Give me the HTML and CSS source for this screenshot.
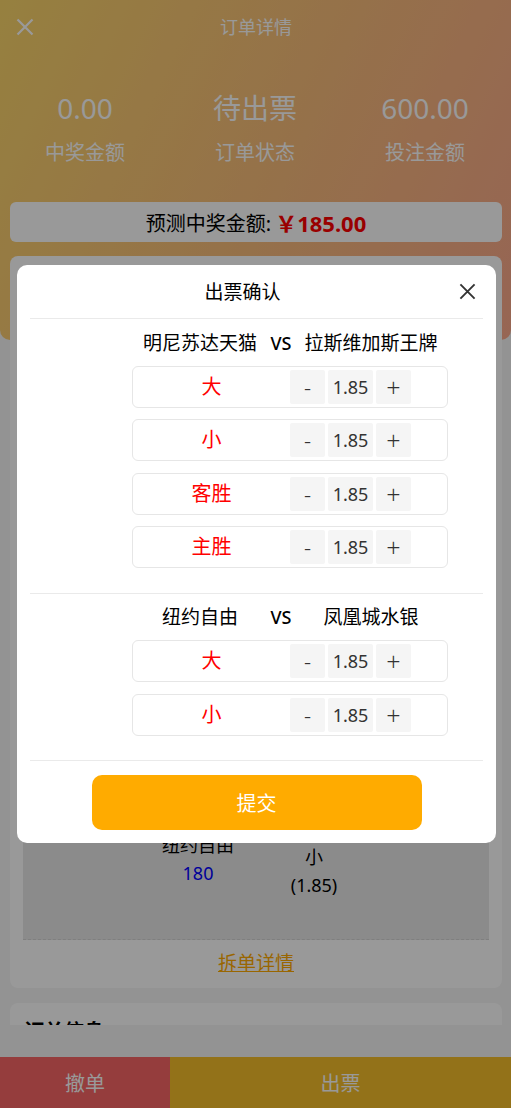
FILE: index.html
```html
<!DOCTYPE html>
<html lang="zh-CN">
<head>
<meta charset="utf-8">
<title>订单详情</title>
<link rel="stylesheet" href="styles.css">
</head>
<body>
<div class="page">
  <header class="hero">
    <div class="nav">
      <svg class="nav-close" viewBox="0 0 18 18" width="18" height="18"><path d="M1.5 1.5L16.5 16.5M16.5 1.5L1.5 16.5"/></svg>
      <div class="nav-title">订单详情</div>
    </div>
    <div class="stats">
      <div class="stat"><div class="stat-value">0.00</div><div class="stat-label">中奖金额</div></div>
      <div class="stat"><div class="stat-value">待出票</div><div class="stat-label">订单状态</div></div>
      <div class="stat"><div class="stat-value">600.00</div><div class="stat-label">投注金额</div></div>
    </div>
    <div class="predict">预测中奖金额: <span class="predict-amount">￥185.00</span></div>
  </header>

  <section class="card bet-card">
    <div class="bet-table">
      <div class="bet-row bet-last">
        <span></span>
        <span class="cell-stack"><span class="cell-top">纽约自由</span><span class="score">180</span></span>
        <span class="cell-stack cell-low"><span>小</span><span>(1.85)</span></span>
        <span></span>
      </div>
    </div>
    <a class="split-link" href="#">拆单详情</a>
  </section>

  <section class="card info-card">
    <div class="card-title">订单信息</div>
  </section>
</div>

<div class="footer">
  <button class="foot-btn btn-cancel">撤单</button>
  <button class="foot-btn btn-issue">出票</button>
</div>

<div class="mask"></div>

<div class="dialog">
  <div class="dialog-inner">
    <div class="dialog-head">
      <span class="dialog-title">出票确认</span>
      <span class="dialog-close"><svg viewBox="0 0 18 18" width="18" height="18"><path d="M1.5 1.5L16.5 16.5M16.5 1.5L1.5 16.5"/></svg></span>
    </div>

    <div class="match">
      <div class="teams"><span>明尼苏达天猫</span><span class="vs">VS</span><span>拉斯维加斯王牌</span></div>
      <div class="options">
        <div class="option"><span class="option-name">大</span><div class="stepper"><span class="step step-minus">-</span><span class="step-value">1.85</span><span class="step step-plus">+</span></div></div>
        <div class="option"><span class="option-name">小</span><div class="stepper"><span class="step step-minus">-</span><span class="step-value">1.85</span><span class="step step-plus">+</span></div></div>
        <div class="option"><span class="option-name">客胜</span><div class="stepper"><span class="step step-minus">-</span><span class="step-value">1.85</span><span class="step step-plus">+</span></div></div>
        <div class="option"><span class="option-name">主胜</span><div class="stepper"><span class="step step-minus">-</span><span class="step-value">1.85</span><span class="step step-plus">+</span></div></div>
      </div>
    </div>

    <div class="match">
      <div class="teams"><span>纽约自由</span><span class="vs">VS</span><span>凤凰城水银</span></div>
      <div class="options">
        <div class="option"><span class="option-name">大</span><div class="stepper"><span class="step step-minus">-</span><span class="step-value">1.85</span><span class="step step-plus">+</span></div></div>
        <div class="option"><span class="option-name">小</span><div class="stepper"><span class="step step-minus">-</span><span class="step-value">1.85</span><span class="step step-plus">+</span></div></div>
      </div>
    </div>

    <div class="dialog-foot"><button class="submit">提交</button></div>
  </div>
</div>
</body>
</html>
```

FILE: styles.css
```css
* { box-sizing: border-box; }
html, body {
  margin: 0;
  padding: 0;
  background: #f5f5f5;
  font-family: "Noto Sans", "Noto Sans CJK SC", sans-serif;
  color: #000;
}
.page { width: 511px; }

.hero {
  height: 340px;
  background: linear-gradient(115deg, #fbd66a 0%, #f9bc7c 55%, #fca98c 100%);
  border-radius: 0 0 10px 10px;
  padding: 0 9px 0 10px;
  color: #fff;
}
.nav {
  height: 54px;
  display: flex;
  align-items: center;
  justify-content: center;
  position: relative;
}
.nav-close {
  position: absolute;
  left: 6px;
  top: 18px;
  stroke: #fff;
  stroke-width: 2.2;
  fill: none;
}
.nav-title { font-size: 18px; line-height: 24px; }

.stats {
  display: grid;
  grid-template-columns: 1fr 1fr 1fr;
  padding-top: 36px;
  margin: 0 -8px 0 -10px;
}
.stat { text-align: center; }
.stat-value { font-size: 28px; line-height: 36px; }
.stat-label { font-size: 20px; line-height: 28px; margin-top: 13px; }

.predict {
  margin-top: 35px;
  height: 40px;
  background: #fff;
  border-radius: 6px;
  display: flex;
  align-items: center;
  justify-content: center;
  font-size: 20px;
  color: #000;
  gap: 4px;
}
.predict-amount { color: #ff0000; font-weight: 700; font-size: 22px; }

.card {
  background: #fff;
  border-radius: 8px;
  margin: 0 9px 0 10px;
}
.bet-card {
  margin-top: -84px;
  padding: 52px 13px 11px;
}
.card-title { font-size: 20px; font-weight: 700; line-height: 30px; }
.bet-table {
  height: 632px;
  background: #e8e8e8;
  border-bottom: 1px dashed #d4d4d4;
  display: flex;
  flex-direction: column;
}
.bet-row {
  display: grid;
  grid-template-columns: 100px 150px 82px 1fr;
  text-align: center;
  font-size: 18px;
  line-height: 28px;
}
.cell-stack { display: flex; flex-direction: column; align-items: center; }
.score { color: #0000ff; }
.bet-last { margin-top: auto; padding-bottom: 40px; }
.cell-low { padding-top: 12px; }
.split-link {
  display: block;
  text-align: center;
  margin-top: 9px;
  font-size: 19px;
  line-height: 28px;
  color: #ffab00;
  text-decoration: underline;
}

.info-card {
  margin-top: 15px;
  padding: 14px 14px 20px;
  min-height: 200px;
}

.footer {
  position: fixed;
  left: 0;
  right: 0;
  bottom: 0;
  height: 83px;
  background: #f5f5f5;
  display: flex;
  align-items: flex-end;
}
.foot-btn {
  border: 0;
  height: 51px;
  color: #fff;
  font-size: 20px;
  font-family: inherit;
  padding: 0;
}
.btn-cancel { width: 170px; background: #f86666; }
.btn-issue { flex: 1; background: #f5be2b; }

.mask {
  position: fixed;
  inset: 0;
  background: rgba(0, 0, 0, 0.4);
  z-index: 10;
}

.dialog {
  position: fixed;
  left: 17px;
  top: 265px;
  width: 479px;
  background: #fff;
  border-radius: 10px;
  z-index: 11;
}
.dialog-inner { padding: 0 13px 13px; }
.dialog-head {
  height: 54px;
  border-bottom: 1px solid #eaeaea;
  display: flex;
  align-items: center;
}
.dialog-title {
  flex: 1;
  text-align: center;
  font-size: 19px;
  line-height: 26px;
  color: #000;
}
.dialog-close {
  width: 24px;
  height: 24px;
  display: flex;
  align-items: center;
  justify-content: center;
  margin-right: 4px;
}
.dialog-close svg { width: 17px; height: 17px; stroke: #333; stroke-width: 2; fill: none; }

.match {
  padding: 8.5px 0 24.5px;
  border-bottom: 1px solid #eaeaea;
}
.teams {
  display: grid;
  grid-template-columns: 138px 24px 1fr;
  margin: 0 34px 0 101px;
  height: 30px;
  align-items: center;
  text-align: center;
  font-size: 19px;
  line-height: 30px;
  color: #000;
  white-space: nowrap;
}
.vs { font-weight: 500; font-size: 18px; }
.options {
  display: flex;
  flex-direction: column;
  gap: 11.5px;
  margin: 8px 35px 0 102px;
}
.option {
  height: 42px;
  border: 1px solid #e6e6e6;
  border-radius: 6px;
  display: flex;
  align-items: center;
}
.option-name {
  flex: 1;
  text-align: center;
  color: #ff0000;
  font-size: 20px;
  line-height: 28px;
}
.stepper {
  display: flex;
  gap: 3px;
  margin-right: 36px;
}
.step, .step-value {
  height: 34px;
  background: #f5f5f5;
  border-radius: 2px;
  display: flex;
  align-items: center;
  justify-content: center;
  color: #333;
  font-size: 18px;
}
.step { width: 35px; }
.step-minus { font-size: 22px; font-weight: 300; }
.step-plus { font-size: 25px; font-weight: 300; }
.step-value { width: 45px; }

.dialog-foot {
  display: flex;
  justify-content: center;
  padding-top: 13.5px;
}
.submit {
  width: 330px;
  height: 55px;
  border: 0;
  border-radius: 10px;
  background: #ffab00;
  color: #fff;
  font-size: 20px;
  font-family: inherit;
}
```
